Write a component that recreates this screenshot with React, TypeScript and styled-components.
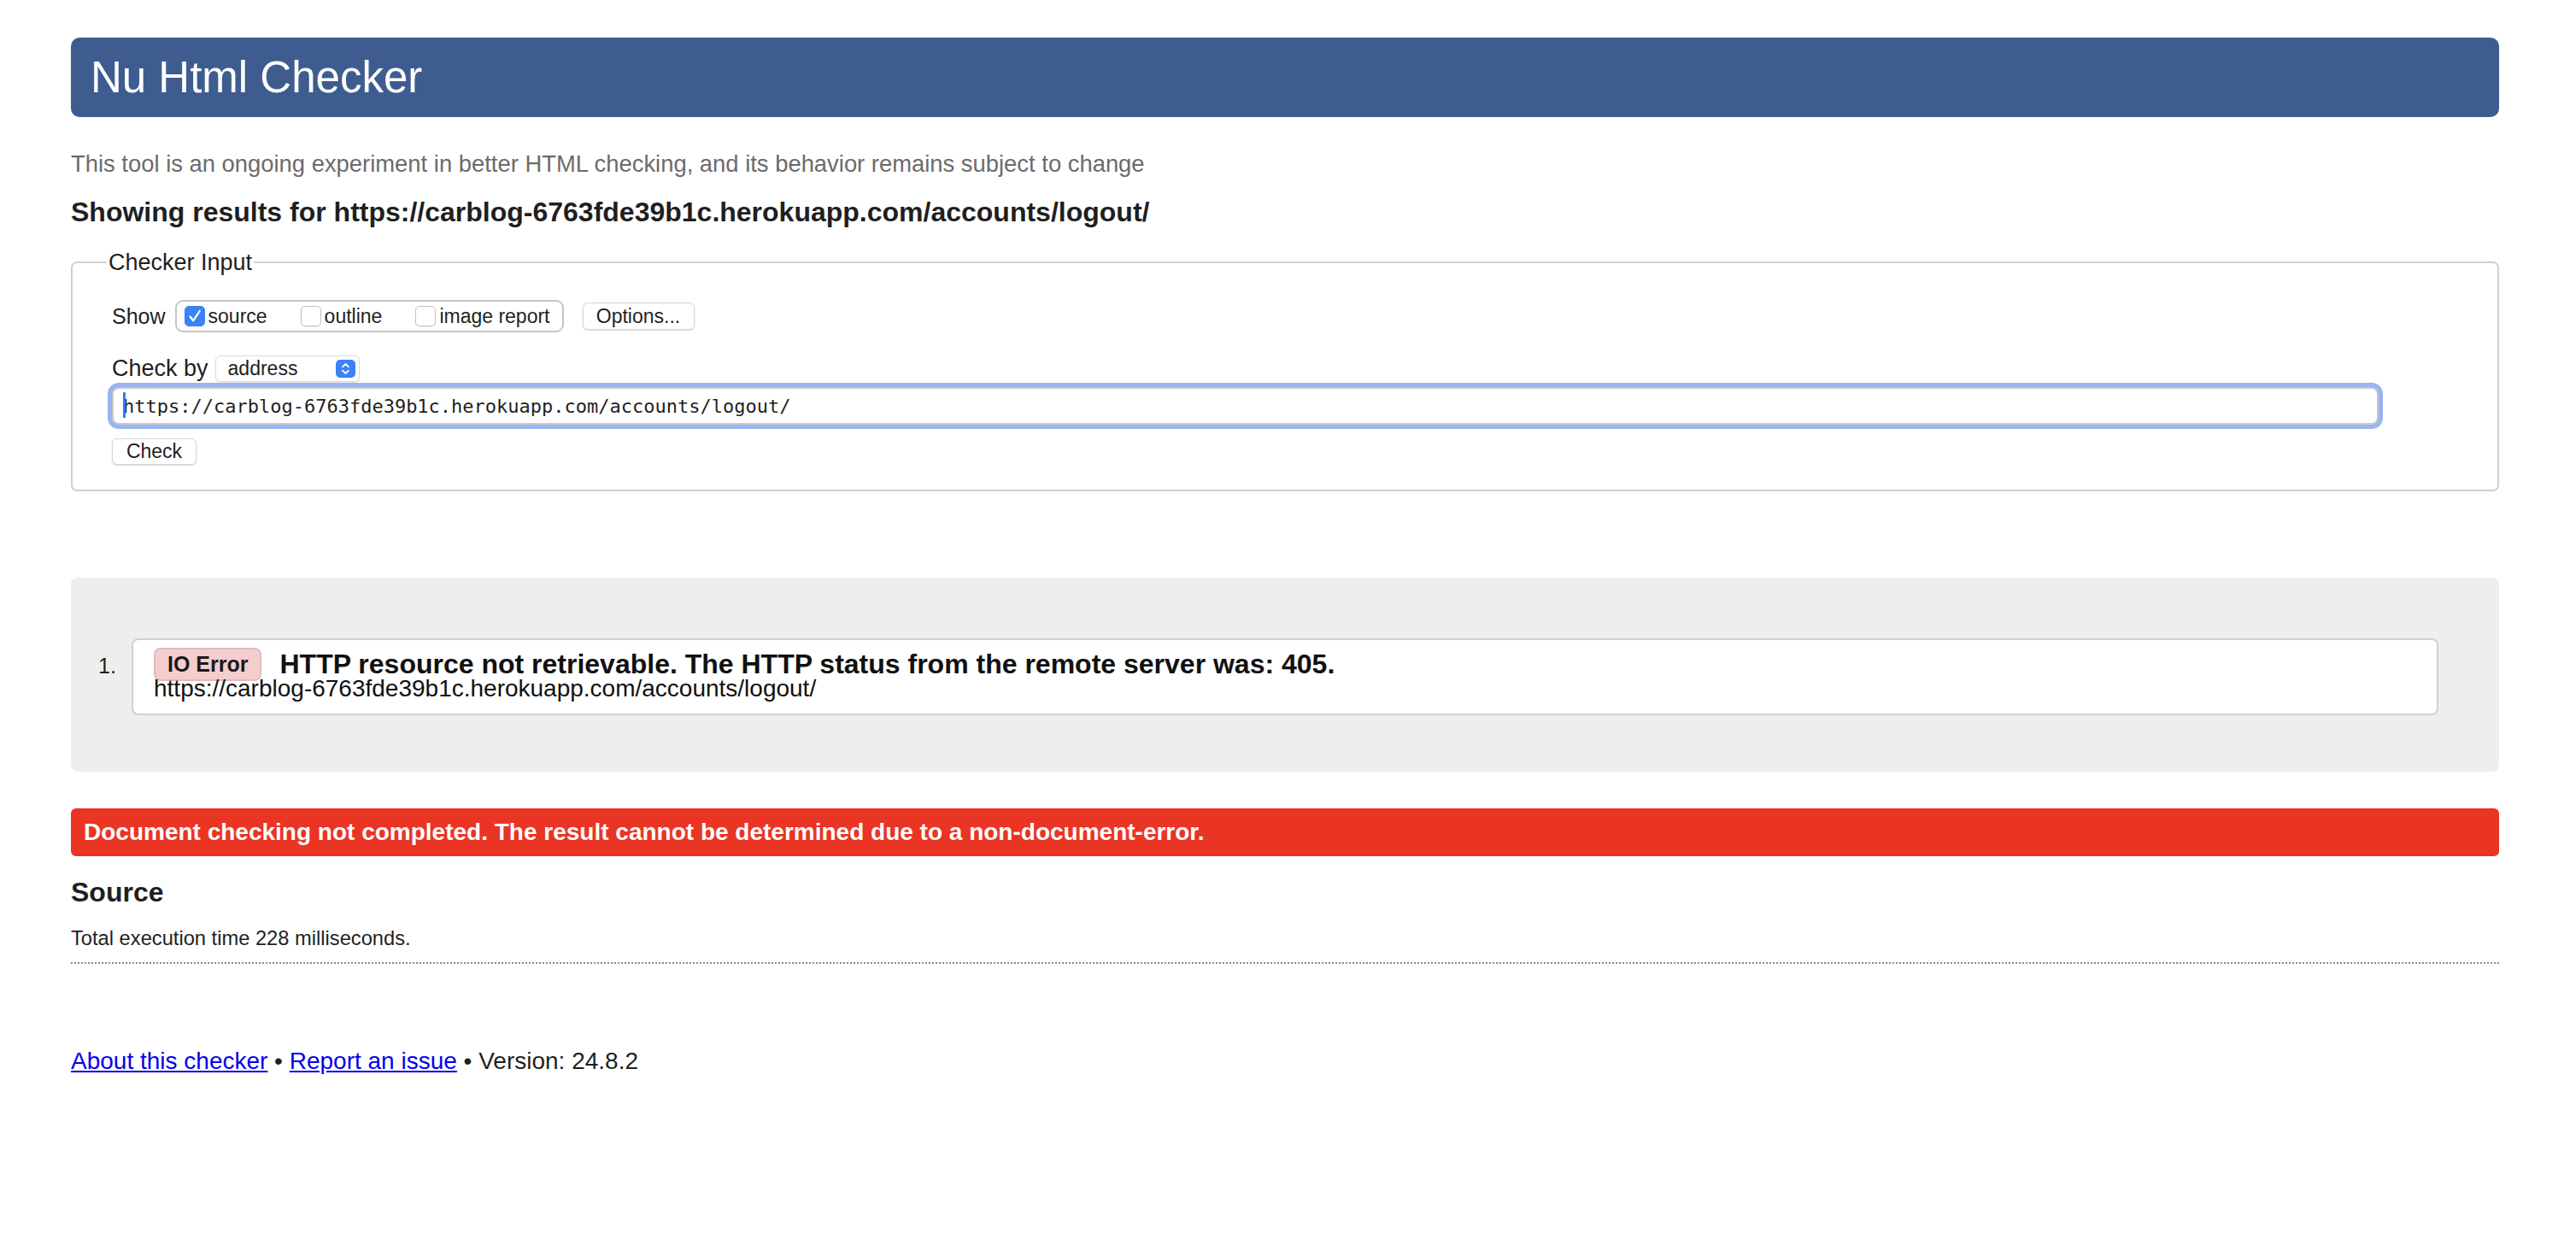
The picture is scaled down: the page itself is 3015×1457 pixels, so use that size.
import React from "react";
import styled, { createGlobalStyle } from "styled-components";

const GlobalStyle = createGlobalStyle`
  html, body { margin: 0; padding: 0; background: #ffffff; }
  body {
    font-family: "Liberation Sans", Arial, Helvetica, sans-serif;
    color: #1f1f1f;
  }
  * { box-sizing: border-box; }
`;

const Page = styled.div`
  padding: 44px 90px 80px 83px;
`;

const Header = styled.h1`
  margin: 0;
  height: 93px;
  display: flex;
  align-items: center;
  padding-left: 23px;
  background: #3e5c90;
  color: #ffffff;
  border-radius: 10px;
  font-size: 51px;
  font-weight: 400;
  line-height: 1;
`;

const Tagline = styled.p`
  margin: 39px 0 0;
  font-size: 27.4px;
  line-height: 32px;
  color: #6b6b6b;
`;

const ResultsFor = styled.h2`
  margin: 21px 0 0;
  font-size: 32px;
  line-height: 38px;
  font-weight: 700;
  color: #1f1f1f;
`;

const InputSet = styled.fieldset`
  margin: 25px 0 0;
  padding: 29px 139px 29px 46px;
  border: 2px solid #d0d0d0;
  border-radius: 7px;
  min-width: 0;
`;

const Legend = styled.legend`
  font-size: 27px;
  line-height: 30px;
  padding: 0 2px;
  margin-left: -6px;
  color: #1f1f1f;
`;

const Row = styled.div<{ $gap?: number; $height: number }>`
  display: flex;
  align-items: center;
  height: ${(p) => p.$height}px;
  margin-top: ${(p) => p.$gap ?? 0}px;
`;

const Label = styled.span<{ $space: number; $size: number }>`
  font-size: ${(p) => p.$size}px;
  margin-right: ${(p) => p.$space}px;
  color: #1f1f1f;
`;

const CheckGroup = styled.div`
  display: flex;
  align-items: center;
  height: 38px;
  padding: 0 14px 0 9px;
  border: 2px solid #c6c6c6;
  border-radius: 9px;
`;

const CheckItem = styled.label<{ $last?: boolean }>`
  display: flex;
  align-items: center;
  gap: 4px;
  font-size: 23px;
  color: #1f1f1f;
  margin-right: ${(p) => (p.$last ? 0 : 39)}px;
`;

const Box = styled.span<{ $checked?: boolean }>`
  width: 24px;
  height: 24px;
  border-radius: 5px;
  display: inline-flex;
  align-items: center;
  justify-content: center;
  background: ${(p) => (p.$checked ? "#3b82f7" : "#ffffff")};
  border: 1px solid ${(p) => (p.$checked ? "#3b82f7" : "#c2c2c2")};
  box-shadow: ${(p) => (p.$checked ? "none" : "0 1px 1px rgba(0,0,0,0.08)")};
`;

const Button = styled.button<{ $width: number; $height: number }>`
  width: ${(p) => p.$width}px;
  height: ${(p) => p.$height}px;
  padding: 0;
  font-family: "Liberation Sans", Arial, sans-serif;
  font-size: 23px;
  color: #1f1f1f;
  background: #ffffff;
  border: 1px solid #d6d6d6;
  border-radius: 6px;
  box-shadow: 0 1px 2px rgba(0, 0, 0, 0.14);
`;

const OptionsButton = styled(Button)`
  margin-left: 22px;
`;

const Select = styled.div`
  width: 169px;
  height: 31px;
  display: flex;
  align-items: center;
  justify-content: space-between;
  padding: 0 4px 0 14px;
  font-size: 23px;
  color: #1f1f1f;
  background: #ffffff;
  border: 1px solid #dcdcdc;
  border-radius: 6px;
  box-shadow: 0 1px 2px rgba(0, 0, 0, 0.12);
`;

const Stepper = styled.span`
  width: 23px;
  height: 21px;
  border-radius: 5px;
  background: #3b82f7;
  display: inline-flex;
  align-items: center;
  justify-content: center;
`;

const UrlWrap = styled.div`
  position: relative;
  width: 100%;
  margin-top: 6px;
`;

const UrlInput = styled.input`
  display: block;
  width: 100%;
  height: 44px;
  padding: 0 11px;
  font-family: "DejaVu Sans Mono", "Liberation Mono", monospace;
  font-size: 22px;
  color: #1f1f1f;
  background: #ffffff;
  border: 2px solid #c9c9c9;
  border-radius: 8px;
  box-shadow: 0 0 0 5px #98b5f1;
  outline: none;
`;

const Caret = styled.span`
  position: absolute;
  left: 13px;
  top: 6px;
  width: 3px;
  height: 30px;
  background: #3478f6;
  border-radius: 1px;
`;

const CheckRow = styled.div`
  margin-top: 16px;
  display: flex;
`;

const Results = styled.section`
  margin-top: 101px;
  padding: 71px 71px 66px 32px;
  background: #eeeeee;
  border-radius: 8px;
`;

const List = styled.ol`
  margin: 0;
  padding: 0;
  list-style: none;
`;

const Item = styled.li`
  display: flex;
  align-items: flex-start;
`;

const Marker = styled.span`
  width: 39px;
  flex: none;
  padding-top: 17px;
  font-size: 25px;
  line-height: 30px;
  color: #1f1f1f;
`;

const Message = styled.div`
  flex: 1;
  background: #ffffff;
  border: 2px solid #d0d0d0;
  border-radius: 8px;
  padding: 9px 24px 14px;
`;

const MessageHead = styled.div`
  display: flex;
  align-items: flex-start;
  gap: 21px;
  height: 33px;
`;

const Badge = styled.span`
  height: 39px;
  padding: 0 14px;
  line-height: 35px;
  font-size: 25px;
  font-weight: 700;
  color: #1a1a1a;
  background: #f5cdcd;
  border: 2px solid #dfbcbc;
  border-radius: 8px;
  white-space: nowrap;
`;

const MessageText = styled.span`
  font-size: 32px;
  line-height: 39px;
  font-weight: 700;
  color: #111111;
  white-space: nowrap;
`;

const MessageUrl = styled.div`
  font-size: 28px;
  line-height: 30px;
  color: #111111;
`;

const Failure = styled.div`
  margin-top: 43px;
  height: 56px;
  display: flex;
  align-items: center;
  padding: 0 15px;
  background: #ea3424;
  color: #ffffff;
  font-size: 28px;
  font-weight: 700;
  border-radius: 6px;
`;

const SourceTitle = styled.h2`
  margin: 23px 0 0;
  font-size: 32px;
  line-height: 38px;
  font-weight: 700;
  color: #1f1f1f;
`;

const Timing = styled.p`
  margin: 21px 0 0;
  padding-bottom: 14px;
  font-size: 23.7px;
  line-height: 28px;
  color: #1f1f1f;
  border-bottom: 2px dotted #8a8a8a;
`;

const Footer = styled.p`
  margin: 98px 0 0;
  font-size: 28px;
  line-height: 32px;
  color: #1f1f1f;
`;

const FooterLink = styled.a`
  color: #0000ee;
  text-decoration: underline;
`;

const CheckMark = () => (
  <svg width="18" height="18" viewBox="0 0 18 18" fill="none">
    <path d="M3.5 9.5 L7.2 14.2 L14.8 2.8" stroke="#ffffff" strokeWidth="2.2" strokeLinecap="round" strokeLinejoin="round" />
  </svg>
);

const UpDown = () => (
  <svg width="13" height="17" viewBox="0 0 13 17" fill="none">
    <path d="M3 6.3 L6.5 3 L10 6.3" stroke="#ffffff" strokeWidth="1.8" strokeLinecap="round" strokeLinejoin="round" />
    <path d="M3 10.7 L6.5 14 L10 10.7" stroke="#ffffff" strokeWidth="1.8" strokeLinecap="round" strokeLinejoin="round" />
  </svg>
);

const url = "https://carblog-6763fde39b1c.herokuapp.com/accounts/logout/";

export default function App() {
  return (
    <>
      <GlobalStyle />
      <Page>
        <Header>Nu Html Checker</Header>
        <Tagline>
          This tool is an ongoing experiment in better HTML checking, and its behavior remains subject to change
        </Tagline>
        <ResultsFor>Showing results for {url}</ResultsFor>

        <InputSet>
          <Legend>Checker Input</Legend>
          <Row $height={38}>
            <Label $size={25} $space={11}>Show</Label>
            <CheckGroup>
              <CheckItem>
                <Box $checked>
                  <CheckMark />
                </Box>
                source
              </CheckItem>
              <CheckItem>
                <Box />
                outline
              </CheckItem>
              <CheckItem $last>
                <Box />
                image report
              </CheckItem>
            </CheckGroup>
            <OptionsButton type="button" $width={131} $height={32}>
              Options...
            </OptionsButton>
          </Row>
          <Row $height={31} $gap={27}>
            <Label $size={27} $space={8}>Check by</Label>
            <Select>
              address
              <Stepper>
                <UpDown />
              </Stepper>
            </Select>
          </Row>
          <UrlWrap>
            <UrlInput type="text" value={url} readOnly />
            <Caret />
          </UrlWrap>
          <CheckRow>
            <Button type="button" $width={99} $height={31}>
              Check
            </Button>
          </CheckRow>
        </InputSet>

        <Results>
          <List>
            <Item>
              <Marker>1.</Marker>
              <Message>
                <MessageHead>
                  <Badge>IO Error</Badge>
                  <MessageText>
                    HTTP resource not retrievable. The HTTP status from the remote server was: 405.
                  </MessageText>
                </MessageHead>
                <MessageUrl>{url}</MessageUrl>
              </Message>
            </Item>
          </List>
        </Results>

        <Failure>
          Document checking not completed. The result cannot be determined due to a non-document-error.
        </Failure>

        <SourceTitle>Source</SourceTitle>
        <Timing>Total execution time 228 milliseconds.</Timing>

        <Footer>
          <FooterLink href="#about">About this checker</FooterLink> •{" "}
          <FooterLink href="#issue">Report an issue</FooterLink> • Version: 24.8.2
        </Footer>
      </Page>
    </>
  );
}
